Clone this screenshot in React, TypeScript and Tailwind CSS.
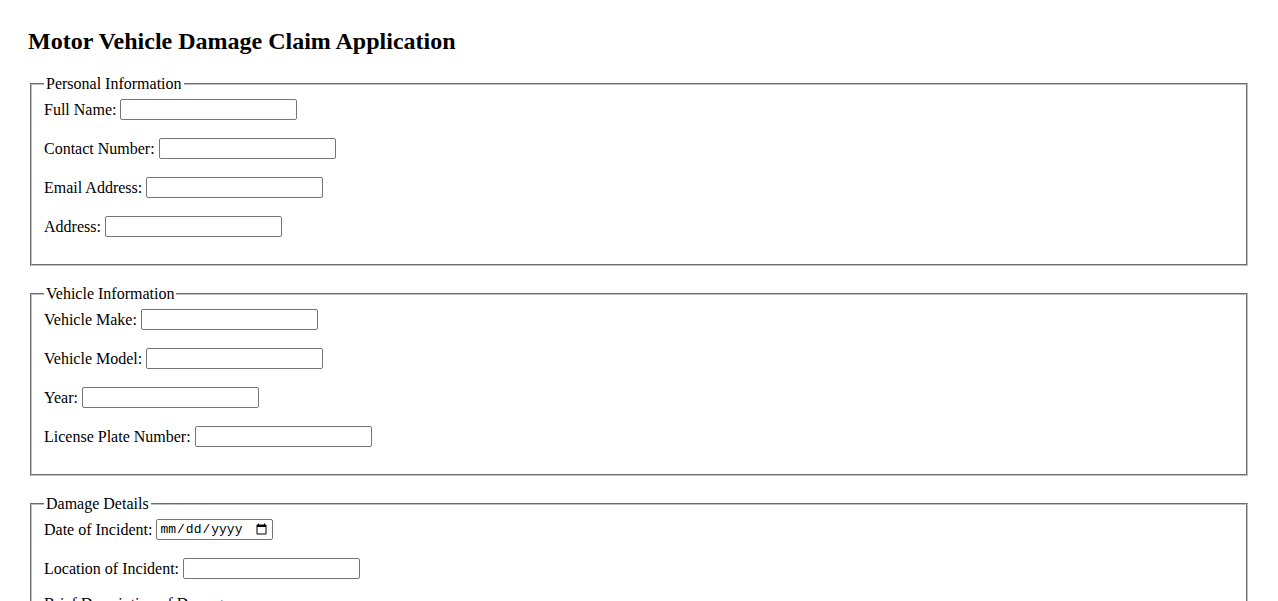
import React from "react";

type Field = { label: string; type?: string; width?: string };

const sections: { title: string; fields: Field[]; tail?: boolean }[] = [
  {
    title: "Personal Information",
    fields: [
      { label: "Full Name:" },
      { label: "Contact Number:" },
      { label: "Email Address:" },
      { label: "Address:" },
    ],
  },
  {
    title: "Vehicle Information",
    fields: [
      { label: "Vehicle Make:" },
      { label: "Vehicle Model:" },
      { label: "Year:" },
      { label: "License Plate Number:" },
    ],
  },
  {
    title: "Damage Details",
    fields: [
      { label: "Date of Incident:", type: "date" },
      { label: "Location of Incident:" },
    ],
    tail: true,
  },
];

function Row({ f }: { f: Field }) {
  return (
    <div className="flex items-center gap-1 h-[21px]">
      <label className="leading-[18px]">{f.label}</label>
      {f.type === "date" ? (
        <input
          type="date"
          className="w-[117px] h-[21px] border border-[#767676] rounded-[2px] px-[2px] text-[13px] bg-white text-black font-['Liberation_Mono',monospace]"
        />
      ) : (
        <input
          type="text"
          className="w-[177px] h-[21px] border border-[#767676] rounded-[2px] px-[2px] text-[13.33px] bg-white font-['Liberation_Sans',Arial,sans-serif]"
        />
      )}
    </div>
  );
}

export default function App() {
  return (
    <div className="bg-white text-black min-h-[601px] px-[28px] pt-[28px] font-['Liberation_Serif','Times_New_Roman',serif] text-[16px]">
      <h2 className="text-[24px] font-bold leading-[27px] mb-[20px]">
        Motor Vehicle Damage Claim Application
      </h2>

      {sections.map((s) => (
        <fieldset
          key={s.title}
          className="mx-[2px] mb-[19px] border-2 border-[#c0c0c0] [border-style:groove] px-[12px] pb-[27px]"
        >
          <legend className="px-[2px] leading-[18px]">{s.title}</legend>
          <div className="flex flex-col gap-[18px] mt-[6px]">
            {s.fields.map((f) => (
              <Row key={f.label} f={f} />
            ))}
            {s.tail && (
              <div className="flex flex-col gap-[4px]">
                <label className="leading-[18px] -mt-[2px]">Brief Description of Damage:</label>
                <textarea
                  rows={4}
                  cols={50}
                  className="w-[400px] h-[70px] border border-[#767676] rounded-[2px] px-[2px] text-[13.33px] font-['Liberation_Mono',monospace]"
                />
              </div>
            )}
          </div>
        </fieldset>
      ))}
    </div>
  );
}
